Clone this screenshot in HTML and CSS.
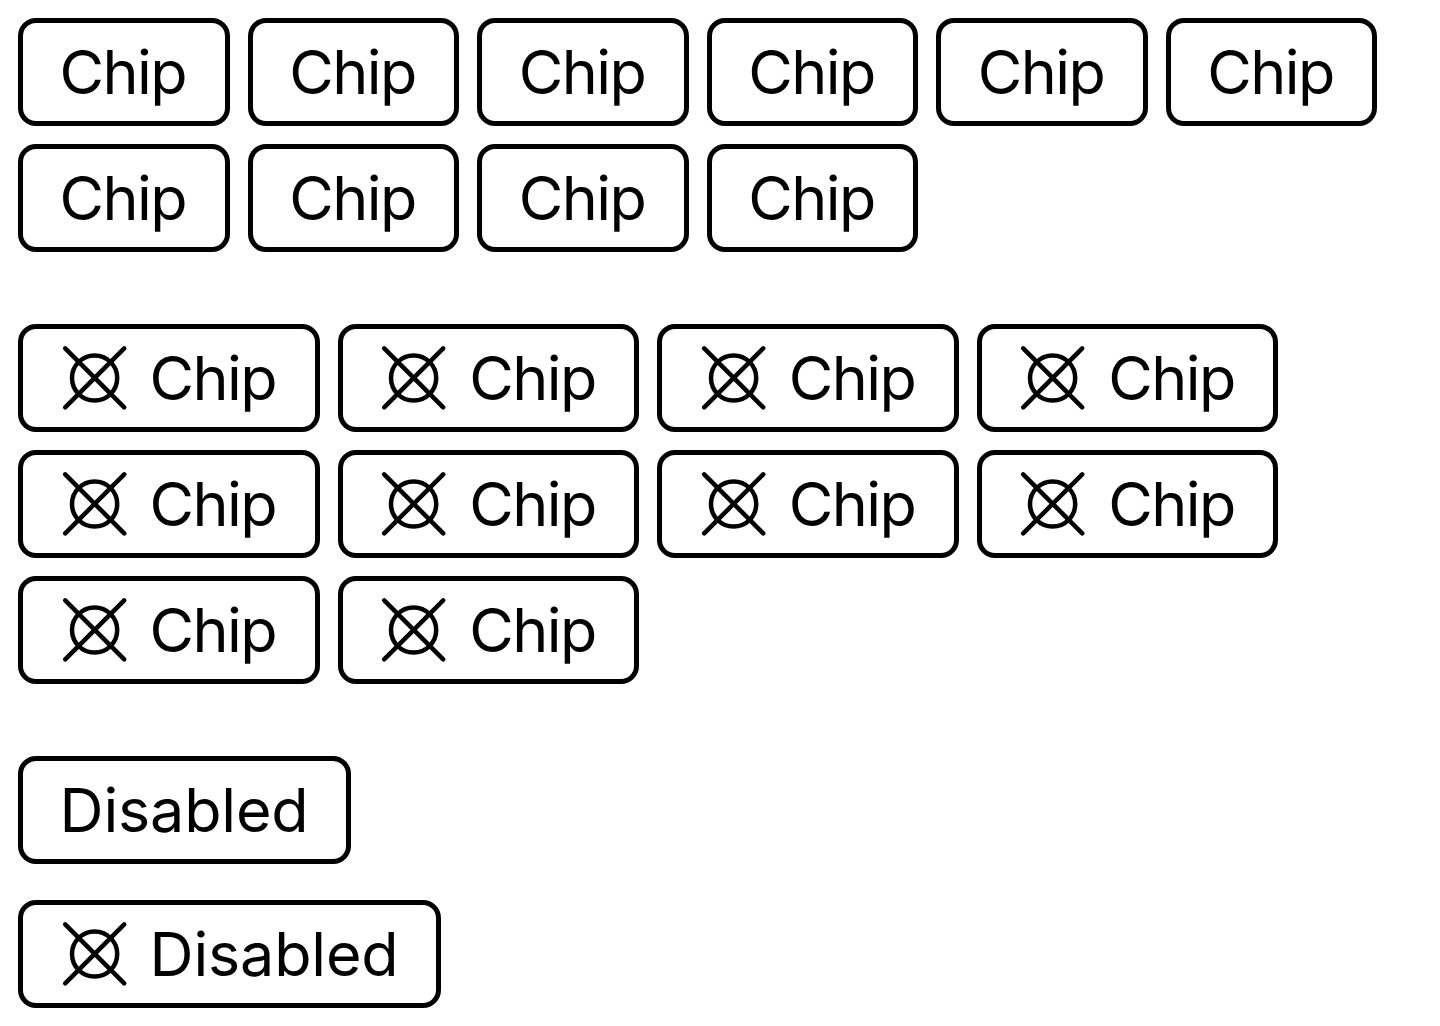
FILE: index.html
```html
<!DOCTYPE html>
<html lang="en">
<head>
    <meta charset="UTF-8">
    <meta name="viewport" content="width=device-width, initial-scale=1.0">
    <title>Chips</title>
    <link rel="stylesheet" href="styles.css">
</head>
<body>
    <svg class="icon-defs" width="0" height="0" aria-hidden="true">
        <symbol id="icon-cross" viewBox="0 0 72 72">
            <circle cx="34.6" cy="36" r="22.6" fill="none" stroke="currentColor" stroke-width="4.5"/>
            <path d="M5.2 6.3L64.2 65.3M64.2 6.3L5.2 65.3" fill="none" stroke="currentColor" stroke-width="4.5" stroke-linecap="round"/>
        </symbol>
    </svg>

    <!-- plain chips -->
    <div class="chip-group">
        <div class="chip">Chip</div>
        <div class="chip">Chip</div>
        <div class="chip">Chip</div>
        <div class="chip">Chip</div>
        <div class="chip">Chip</div>
        <div class="chip">Chip</div>
        <div class="chip">Chip</div>
        <div class="chip">Chip</div>
        <div class="chip">Chip</div>
        <div class="chip">Chip</div>
    </div>

    <!-- chips with icon -->
    <div class="chip-group">
        <div class="chip"><svg class="chip-icon"><use href="#icon-cross"/></svg>Chip</div>
        <div class="chip"><svg class="chip-icon"><use href="#icon-cross"/></svg>Chip</div>
        <div class="chip"><svg class="chip-icon"><use href="#icon-cross"/></svg>Chip</div>
        <div class="chip"><svg class="chip-icon"><use href="#icon-cross"/></svg>Chip</div>
        <div class="chip"><svg class="chip-icon"><use href="#icon-cross"/></svg>Chip</div>
        <div class="chip"><svg class="chip-icon"><use href="#icon-cross"/></svg>Chip</div>
        <div class="chip"><svg class="chip-icon"><use href="#icon-cross"/></svg>Chip</div>
        <div class="chip"><svg class="chip-icon"><use href="#icon-cross"/></svg>Chip</div>
        <div class="chip"><svg class="chip-icon"><use href="#icon-cross"/></svg>Chip</div>
        <div class="chip"><svg class="chip-icon"><use href="#icon-cross"/></svg>Chip</div>
    </div>

    <div class="chip-group chip-group-single">
        <div class="chip chip-disabled">Disabled</div>
    </div>

    <div class="chip-group">
        <div class="chip chip-disabled"><svg class="chip-icon"><use href="#icon-cross"/></svg>Disabled</div>
    </div>
</body>
</html>
```

FILE: styles.css
```css
body {
    margin: 0;
    padding: 18px;
    background-color: #fff;
    color: #000;
    font-family: Inter, "Liberation Sans", sans-serif;
    font-size: 61px;
}

.icon-defs {
    position: absolute;
}

.chip-group {
    display: flex;
    flex-wrap: wrap;
    gap: 18px;
    margin-bottom: 72px;
}

.chip-group-single {
    margin-bottom: 36px;
}

.chip-group:last-child {
    margin-bottom: 0;
}

.chip {
    display: flex;
    align-items: center;
    box-sizing: border-box;
    height: 108px;
    padding: 0 38.4px 0 36.6px;
    border: 5px solid #000;
    border-radius: 18px;
    letter-spacing: -1.55px;
}

.chip-disabled {
    padding-right: 37.1px;
    letter-spacing: -0.17px;
}

.chip-icon {
    width: 72px;
    height: 72px;
    margin-right: 18px;
}
```
